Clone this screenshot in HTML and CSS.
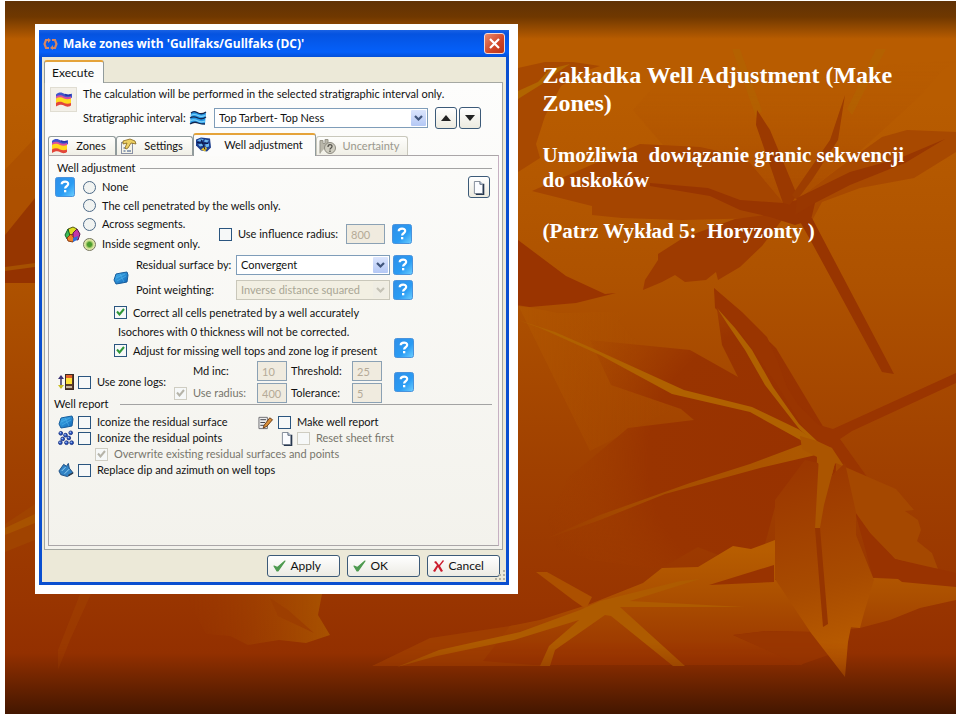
FILE: index.html
```html
<!DOCTYPE html>
<html lang="pl">
<head>
<meta charset="utf-8">
<title>Make Zones – Well Adjustment</title>
<link rel="stylesheet" href="styles.css">
</head>
<body>
<svg class="defs" aria-hidden="true">
  <defs>
    <linearGradient id="gHelp" x1="0" y1="0" x2="1" y2="1"><stop offset="0" stop-color="#2f8fe8"/><stop offset=".6" stop-color="#2a9cf4"/><stop offset="1" stop-color="#6fd0ff"/></linearGradient>
    <linearGradient id="gBlue" x1="0" y1="0" x2="1" y2="1"><stop offset="0" stop-color="#45b4ee"/><stop offset="1" stop-color="#0f63b5"/></linearGradient>
    <symbol id="help" viewBox="0 0 20 20"><rect x=".5" y=".5" width="19" height="19" rx="2" fill="url(#gHelp)" stroke="#4a93dc"/><path d="M6.700 7.200C6.800 3.800 13.300 3.700 13.200 7c0 2.200-3.100 2.300-3.100 4.500" fill="none" stroke="#fff" stroke-width="2.200"/><rect x="9" y="13" width="2.300" height="2.300" fill="#fff"/></symbol>
    <symbol id="flag" viewBox="0 0 18 16"><path d="M1 3c3-3 6-2 9-.5s5 1 7-.5v4c-3 2-5 1-8 0S4 5 1 7z" fill="#3f55cc"/><path d="M1 5c3-2 6-1 8 0s5 1 7 0v4c-3 2-5 1-7 0S4 7 1 9z" fill="#d94f9e"/><path d="M1 7c3-2 6-1 8 0s5 1 7 0v5c-3 2-5 1-7 0s-5-2-8 0z" fill="#ffd91c"/><path d="M1 11.500c3-2 6-1 8 0s5 1 7 0v2.500c-3 2-5 1-7 0s-5-1-8 1z" fill="#e2463a"/><path d="M10 3c2 1 4 1 6 .3" fill="none" stroke="#2633a8" stroke-width="1.500"/></symbol>
    <symbol id="waves" viewBox="0 0 18 16"><path d="M2 3c3-3 5-1 7 0s5 1 8-1l-1 12c-3 1-5 0-7-1s-5-1-8 1z" fill="#2a9be8"/><path d="M2 3c3-3 5-1 7 0s5 1 8-1M1 8c3-2 6-1 8 0s5 1 8-1M1 14c3-2 6-2 8-1s4 1 7 1" fill="none" stroke="#14264f" stroke-width="1.300"/><path d="M2 5.500c3-2 5-1 7 0s5 1 7 0M1 11c3-2 6-1 8 0s5 1 7 0" fill="none" stroke="#7fd4fa" stroke-width="1.200"/></symbol>
    <symbol id="props" viewBox="0 0 18 16"><rect x="2.500" y="4.500" width="11" height="11" fill="#f5f3e6" stroke="#8a91a4"/><path d="M4.500 13h2m1.500 0h4M4.500 10h2" stroke="#30508a"/><path d="M4 3l7-2 5 2 1 3-5-1-3 5-2 1-1-1 2-5-4 1z" fill="#edd063" stroke="#83651b" stroke-width=".8"/></symbol>
    <symbol id="wells" viewBox="0 0 18 16"><path d="M2 3l5-2 9 1 1 9-4 4-6-1-5-5z" fill="#1c3e8d"/><path d="M3 4l4-2 3 1-4 2zM11 3l4 1-2 2-3-1zM4 8l4-1 2 2-4 1zM11 8l4-1v3l-3 1z" fill="#6db7ef"/><path d="M7 13l4-3 2 2-2 3z" fill="#e6c02d"/><path d="M3 6l11 1M7 3l4 10" stroke="#0b1746"/></symbol>
    <symbol id="unc" viewBox="0 0 18 16"><path d="M1 15V2h3v3h2V1h3v5" fill="#b9b7aa" stroke="#98968a"/><circle cx="11" cy="9.500" r="5.500" fill="#cfcdc0" stroke="#8e8c82"/><path d="M9 8.500c0-3 4-3 4-.5 0 1.500-2 1.500-2 3m0 1v1.500" fill="none" stroke="#55534c" stroke-width="1.300"/></symbol>
    <symbol id="segs" viewBox="0 0 17 17"><path d="M4 3l5-2 4 2-2 5-6 1z" fill="#dede22" stroke="#565b13"/><path d="M9 7l4-4 3 5-2 6-5-1z" fill="#c237a9" stroke="#5d174f"/><path d="M4 3l2 7-3 3-2-4z" fill="#3cbd55" stroke="#17602a"/><path d="M3 12l4-4 3 4-1 4-5-1z" fill="#ef832c" stroke="#8b3d12"/><path d="M9 12l5-2-1 4-4 2z" fill="#2c6fd8"/></symbol>
    <symbol id="surf" viewBox="0 0 16 14"><path d="M3 3l5-1 6-1 1 3-1 7-5 1-6 1-2-4z" fill="url(#gBlue)" stroke="#175d9c"/><path d="M3 7l9-4M4 10l9-5M7 3l4 8" stroke="#5bbdf0" stroke-width=".5"/></symbol>
    <symbol id="points" viewBox="0 0 17 16"><g fill="#2953bd" stroke="#122977" stroke-width=".8"><circle cx="3" cy="3" r="2"/><circle cx="8" cy="5" r="2"/><circle cx="13.500" cy="2.500" r="2"/><circle cx="11.500" cy="8" r="2"/><circle cx="5" cy="9" r="2"/><circle cx="2.500" cy="13" r="2"/><circle cx="9" cy="13" r="2"/><circle cx="14.500" cy="13" r="2"/></g><g fill="#a9c9fb"><circle cx="2.500" cy="2.500" r=".8"/><circle cx="7.500" cy="4.500" r=".8"/><circle cx="13" cy="2" r=".8"/><circle cx="11" cy="7.500" r=".8"/><circle cx="4.500" cy="8.500" r=".8"/><circle cx="2" cy="12.500" r=".8"/><circle cx="8.500" cy="12.500" r=".8"/><circle cx="14" cy="12.500" r=".8"/></g></symbol>
    <symbol id="dip" viewBox="0 0 17 16"><path d="M1 9l5-7 3 2 2-3 1 5 4 5-6 4-7-2z" fill="#3182c4" stroke="#1d4c80"/><path d="M4 9l4-4M7 12l5-5" stroke="#9bd8f4"/><path d="M11 14l5-3" stroke="#333c49" stroke-width="1.500"/></symbol>
    <symbol id="logs" viewBox="0 0 17 16"><path d="M3 2v12" stroke="#3f3560" stroke-width="1.500"/><path d="M0 5l3-4 3 4z" fill="#3b3477"/><path d="M0 11l3 4 3-4z" fill="#c9bd24"/><rect x="7.500" y=".5" width="8" height="15" fill="#5a3a2a" stroke="#3b2b23"/><path d="M8 1h6v3H8z" fill="#e0602b"/><path d="M8 4h6v6H8z" fill="#ffe23a"/><path d="M8 12h6v2H8z" fill="#c7b79c"/></symbol>
    <symbol id="report" viewBox="0 0 17 16"><path d="M1.500 2.500h9v12h-9z" fill="#ececec" stroke="#6c6c70"/><path d="M3 5h6M3 8h5M3 11h6" stroke="#3d3d45"/><path d="M7 11l6-8 3 2-6 7-4 2z" fill="#d9903a" stroke="#6b3d17"/></symbol>
    <symbol id="page" viewBox="0 0 13 16"><path d="M1.500 1.500h6l3 3v10h-9z" fill="#fbfcff" stroke="#7d8794"/><path d="M7.500 1.500v3h3" fill="#c5d6ee" stroke="#56606f"/><path d="M11.500 4v11.500H3" fill="none" stroke="#27374f" stroke-width="1.500"/></symbol>
    <symbol id="ok" viewBox="0 0 13 12"><path d="M1 6l3 5 1 0L12 1 4.500 7.500z" fill="#4d9a4f" stroke="#4d9a4f" stroke-width="1.200" stroke-linejoin="round"/></symbol>
    <symbol id="no" viewBox="0 0 11 12"><path d="M1 2l2-1 3 4 4-5 1 1-4 5 3 5-2 1-3-5-3 5-2-1 4-6z" fill="#cb1c2d"/></symbol>
    <symbol id="chev" viewBox="0 0 9 7"><path d="M1 1l3.500 3.500L8 1" fill="none" stroke="currentColor" stroke-width="2.200"/></symbol>
    <symbol id="tick" viewBox="0 0 9 8"><path d="M1 3.500l2.500 3L8 1" fill="none" stroke="currentColor" stroke-width="2"/></symbol>
  </defs>
</svg>

<main class="slide">
  <svg class="leaves" viewBox="5 1 951 713" preserveAspectRatio="none" aria-hidden="true">
    <defs>
      <linearGradient id="lf1" gradientUnits="userSpaceOnUse" x1="0" y1="60" x2="0" y2="200"><stop offset="0" stop-color="#b55800" stop-opacity="0"/><stop offset="1" stop-color="#a64700"/></linearGradient>
      <linearGradient id="lf2" gradientUnits="userSpaceOnUse" x1="0" y1="550" x2="0" y2="660"><stop offset="0" stop-color="#b75d00"/><stop offset=".4" stop-color="#ac5000"/><stop offset="1" stop-color="#993400"/></linearGradient>
      <linearGradient id="lf3" gradientUnits="userSpaceOnUse" x1="790" y1="470" x2="850" y2="660"><stop offset="0" stop-color="#9b3700"/><stop offset=".6" stop-color="#a84b00"/><stop offset="1" stop-color="#bb5e00"/></linearGradient>
      <radialGradient id="lf4" gradientUnits="userSpaceOnUse" cx="780" cy="460" r="240"><stop offset="0" stop-color="#983200"/><stop offset=".55" stop-color="#993400"/><stop offset="1" stop-color="#a24000" stop-opacity="0"/></radialGradient>
      <linearGradient id="lf5" x1="0" y1="0" x2="1" y2="0"><stop offset="0" stop-color="#a24200" stop-opacity="0"/><stop offset="1" stop-color="#b06000"/></linearGradient>
      <linearGradient id="lf6" gradientUnits="userSpaceOnUse" x1="820" y1="448" x2="540" y2="541"><stop offset="0" stop-color="#ae5900"/><stop offset=".7" stop-color="#a44a00"/><stop offset="1" stop-color="#9c3a00"/></linearGradient>
      <linearGradient id="lf7" x1="0" y1="0" x2="1" y2="0"><stop offset="0" stop-color="#b55c00"/><stop offset="1" stop-color="#aa4e00" stop-opacity="0"/></linearGradient>
    </defs>
    <path d="M5 170l30-32v60L5 235z" fill="#a84a00" opacity=".5"/>
    <path d="M5 235l30-37v70L5 270z" fill="#963600"/>
    <path d="M5 270l30-6v19H5z" fill="#943200"/>
    <path d="M5 267l30-4v4L5 271z" fill="#a65000"/>
    <path d="M5 524l30-20v36L5 552z" fill="#a04300"/>
    <path d="M5 528l30-14v9L5 535z" fill="#a85200"/>

    <path d="M518 68l27-6h28l27 4-15 5-24 15-16 30-9 28 4 14-22 14z" fill="#a84900"/>
    <path d="M518 91l20-9 12-13 20-5-15 10-13 10-24 15z" fill="#b16500"/>

    <path d="M660 80l300-20-18 10-22 26-60 55-63 49-20 10-52-17-62-48-30-35z" fill="url(#lf1)" opacity=".6"/>
    <path d="M732 49h8l22 62-6 6zM876 49h10l-34 66-5-6z" fill="#b06800" opacity=".4"/>
    <path d="M532 191l66-29 42-18 60 3 45 10 40 48-18 13-85 2-60-2-30-3v-9z" fill="#a54500"/>
    <path d="M797 200l43-33 42-30 25-7 49 2v20l-42 26-54 10-38 14-14 26z" fill="#a84900"/>
    <path d="M788 212l-26 34-22 21-22 13-2-8-10 8-21 2-10-7-13 7-19 8 2-10 13-20v-6l25-16 52-19z" fill="#9e3b00"/>
    <path d="M650 183l58 5 32 12 43 3 14-3 18 3-4 17-16 5-25-8-30-7-30-14-60-10z" fill="#983500"/>
    <path d="M757 110l13 20 27 65-7 10-7-2-27-78z" fill="#9b3900"/>
    <path d="M845 95l-7 45-26 40-15 20-5-5 38-55z" fill="#9d3d00"/>
    <path d="M797 198l53-26 50-14 45-19-40 24-55 22-35 18-20 12z" fill="#993700"/>
    <path d="M798 218h14l82 156-12-2-70-129z" fill="#983500"/>

    <path d="M518 240l48 36 39 18 11-1-40 10-46 4-12-1z" fill="#9a3400"/>
    <path d="M518 305l40 8 72-2-12 10 72 80-100 50z" fill="url(#lf7)" opacity=".45"/>
    <path d="M590 340l100 10 48 27-16-32-8-57 62 60 60 100 34 49-20 0-75 10-12 44-42 5-23-9-35 20-13 1-60-8-52-18 30-64 60-50 66-8-13-11-70-24z" fill="url(#lf4)"/>
    <path d="M714 288l28 24 25 25 11 25 9 25 12 19 20 19 14 4 123-56v10l-104 48-12 8 30 42-34-14-33-40-28-45-35-50-25-24z" fill="#9a3500"/>
    <path d="M518 320l37 12 39 17 90 41 68 17 46 22 18 12-10 2-56-31-78-18-72-39-60-27z" fill="#b06100"/>
    <path d="M717 308l18 20 17 22 21 37 26 37 18 17 5 7-22-18-35-45-20-35-17-25z" fill="#b06100"/>
    <path d="M806 443l-56 21-60 19-90 32-60 26 60-21 65-26 95-26 60-14 12-6z" fill="url(#lf6)"/>
    <path d="M800 436l17 5 15 7 33 50-30-35-11 42-4 23-5 1 2-72-15-8z" fill="#ab5500"/>
    <path d="M836 463l60 26 18 21-9 1 13 9 3 10-4 11 15 12 6 16-18-3-25-7-25-26-15-21-20-10z" fill="#a54800"/>
    <path d="M855 512l15 21 25 26 61 14v17l-54-6-4-5-25-2z" fill="#993300"/>
    <path d="M372 666l58-28 80-12 40-6v46z" fill="#9f3e00"/>
    <path d="M510 626l30-6 50-16 53-21 19-15 36-1 35-21 18 3 24-9v40l100-2 23 1 4 3 54 5v13l-36 8-30 12-30 8-48 4-47-1-32 4 70 30-270 0-50-4z" fill="url(#lf2)"/>
    <path d="M709 585l65-20v17z" fill="#993300"/>
    <path d="M733 635l32-4 50 1 16 22-31 11z" fill="#993600"/>
    <path d="M536 572h11l45 25-6 12-13-9z" fill="#ac5000"/>
    <path d="M397 667l42-17 81-18 60-22 20-9 80-20 20-2-70 22 115 6h-125l65 59h-12l-62-50-6-1-50 35-5 16h-10l9-20 30-26-65 20-77 16z" fill="#ae5b00"/>
    <path d="M775 500l30-40 13 3 10 16 17-16 11 49v23l18 45-10 33-4 15-9-1-3 15-3 35-34-44-36-54z" fill="url(#lf3)"/>
    <path d="M819 455l16 8-11 42-4 23h-5z" fill="#ab5500"/>
    <path d="M815 528h5l8 96-5 3z" fill="#963500"/>
    <path d="M185 594h137l-4 21 12 20-24 8-27-3-31 5-18-9-24-2z" fill="url(#lf5)" opacity=".7"/>
    <path d="M270 598l18 12 26 23-36-17z" fill="#9d3e00"/>
    <path d="M80 594h11L70 640l-12 30v-20z" fill="#a94b00" opacity=".3"/>
  </svg>

  <section class="picture">
    <form class="window">
      <header class="titlebar">
        <svg width="15" height="12" viewBox="0 0 15 12" aria-hidden="true"><path d="M6 2H3L1.500 6 3 10h3M9 2h3l1.500 4L12 10H9" fill="none" stroke="#d98660" stroke-width="2.200"/><path d="M5 0l3 2-3 3zM10 12l-3-2 3-3z" fill="#d98660"/></svg>
        <h1>Make zones with 'Gullfaks/Gullfaks (DC)'</h1>
        <button type="button" class="close" aria-label="Close"><svg width="13" height="13" viewBox="0 0 13 13"><path d="M2 2l9 9M11 2l-9 9" stroke="#fff" stroke-width="2.200"/></svg></button>
      </header>
      <div class="body">
        <nav class="outer-tabs"><button type="button" class="tab active">Execute</button></nav>
        <div class="outer-panel">
          <div class="intro">
            <button type="button" class="icon-tile" aria-label="Zones"><svg width="18" height="17"><use href="#flag"/></svg></button>
            <div class="intro-text">
              <p>The calculation will be performed in the selected stratigraphic interval only.</p>
              <div class="interval">
                <label for="interval">Stratigraphic interval:</label>
                <svg width="18" height="16"><use href="#waves"/></svg>
                <span class="combo wide"><select id="interval"><option>Top Tarbert- Top Ness</option></select><i><svg width="9" height="7"><use href="#chev"/></svg></i></span>
                <button type="button" class="square" aria-label="Previous"><svg width="10" height="6" viewBox="0 0 10 6"><path d="M0 6l5-6 5 6z" fill="#222"/></svg></button>
                <button type="button" class="square" aria-label="Next"><svg width="10" height="6" viewBox="0 0 10 6"><path d="M0 0h10L5 6z" fill="#222"/></svg></button>
              </div>
            </div>
          </div>

          <nav class="inner-tabs">
            <button type="button" class="tab t-zones"><svg width="18" height="16"><use href="#flag"/></svg><span>Zones</span></button>
            <button type="button" class="tab t-settings"><svg width="18" height="16"><use href="#props"/></svg><span>Settings</span></button>
            <button type="button" class="tab t-wells active"><svg width="18" height="17"><use href="#wells"/></svg><span>Well adjustment</span></button>
            <button type="button" class="tab t-unc" disabled><svg width="18" height="17"><use href="#unc"/></svg><span>Uncertainty</span></button>
          </nav>

          <div class="inner-panel">
            <h2 class="legend"><span>Well adjustment</span></h2>
            <div class="row first">
              <button type="button" class="help" aria-label="Help"><svg width="20" height="20"><use href="#help"/></svg></button>
              <label class="opt"><input type="radio" name="mode">None</label>
              <button type="button" class="square end" aria-label="New sheet"><svg width="12" height="15"><use href="#page"/></svg></button>
            </div>
            <div class="row second"><label class="opt"><input type="radio" name="mode">The cell penetrated by the wells only.</label></div>
            <div class="segments">
              <svg width="17" height="17"><use href="#segs"/></svg>
              <div class="stack">
                <label class="opt"><input type="radio" name="mode">Across segments.</label>
                <label class="opt"><input type="radio" name="mode" checked>Inside segment only.</label>
              </div>
              <label class="opt influence"><span class="check"><input type="checkbox"></span>Use influence radius:</label>
              <input class="field" type="text" value="800" aria-label="Influence radius" disabled>
              <button type="button" class="help" aria-label="Help"><svg width="20" height="20"><use href="#help"/></svg></button>
            </div>
            <div class="residual">
              <svg width="16" height="14"><use href="#surf"/></svg>
              <label for="surface">Residual surface by:</label>
              <span class="combo"><select id="surface"><option>Convergent</option></select><i><svg width="9" height="7"><use href="#chev"/></svg></i></span>
              <button type="button" class="help" aria-label="Help"><svg width="20" height="20"><use href="#help"/></svg></button>
              <label for="weight">Point weighting:</label>
              <span class="combo off"><select id="weight" disabled><option>Inverse distance squared</option></select><i><svg width="9" height="7"><use href="#chev"/></svg></i></span>
              <button type="button" class="help" aria-label="Help"><svg width="20" height="20"><use href="#help"/></svg></button>
            </div>
            <div class="corrections">
              <div class="stack">
                <label class="opt"><span class="check"><input type="checkbox" checked><svg width="9" height="8"><use href="#tick"/></svg></span>Correct all cells penetrated by a well accurately</label>
                <p>Isochores with 0 thickness will not be corrected.</p>
                <label class="opt"><span class="check"><input type="checkbox" checked><svg width="9" height="8"><use href="#tick"/></svg></span>Adjust for missing well tops and zone log if present</label>
              </div>
              <button type="button" class="help" aria-label="Help"><svg width="20" height="20"><use href="#help"/></svg></button>
            </div>
            <div class="logs">
              <svg width="17" height="16"><use href="#logs"/></svg>
              <label class="opt"><span class="check"><input type="checkbox"></span>Use zone logs:</label>
              <div class="log-grid">
                <label class="inc" for="inc">Md inc:</label>
                <input class="field" id="inc" type="text" value="10" disabled>
                <label for="thr">Threshold:</label>
                <input class="field" id="thr" type="text" value="25" disabled>
                <label class="opt dim"><span class="check off"><input type="checkbox" checked disabled><svg width="9" height="8"><use href="#tick"/></svg></span>Use radius:</label>
                <input class="field" type="text" value="400" aria-label="Radius" disabled>
                <label for="tol">Tolerance:</label>
                <input class="field" id="tol" type="text" value="5" disabled>
              </div>
              <button type="button" class="help" aria-label="Help"><svg width="20" height="20"><use href="#help"/></svg></button>
            </div>
            <h2 class="legend report"><span>Well report</span></h2>
            <div class="report-grid">
              <div class="item"><svg width="16" height="14"><use href="#surf"/></svg><label class="opt"><span class="check"><input type="checkbox"></span>Iconize the residual surface</label></div>
              <div class="item"><svg width="17" height="15"><use href="#report"/></svg><label class="opt"><span class="check"><input type="checkbox"></span>Make well report</label></div>
              <div class="item"><svg width="16" height="16"><use href="#points"/></svg><label class="opt"><span class="check"><input type="checkbox"></span>Iconize the residual points</label></div>
              <div class="item sub"><svg width="12" height="15"><use href="#page"/></svg><label class="opt dim"><span class="check off"><input type="checkbox" disabled></span>Reset sheet first</label></div>
              <div class="item over"><label class="opt dim"><span class="check off"><input type="checkbox" checked disabled><svg width="9" height="8"><use href="#tick"/></svg></span>Overwrite existing residual surfaces and points</label></div>
              <div class="item all"><svg width="16" height="16"><use href="#dip"/></svg><label class="opt"><span class="check"><input type="checkbox"></span>Replace dip and azimuth on well tops</label></div>
            </div>
          </div>
        </div>
        <footer class="actions">
          <button type="button"><svg width="13" height="12"><use href="#ok"/></svg>Apply</button>
          <button type="button"><svg width="13" height="12"><use href="#ok"/></svg>OK</button>
          <button type="button"><svg width="11" height="12"><use href="#no"/></svg>Cancel</button>
          <svg class="grip" width="11" height="11" viewBox="0 0 11 11" aria-hidden="true"><path d="M9 0h2v2H9zM5 4h2v2H5zM9 4h2v2H9zM1 8h2v2H1zM5 8h2v2H5zM9 8h2v2H9z" fill="#b3b2a4"/></svg>
        </footer>
      </div>
    </form>
  </section>

  <article class="notes">
    <h3>Zakładka Well Adjustment (Make Zones)</h3>
    <p>Umożliwia&nbsp; dowiązanie granic sekwencji do uskoków</p>
    <p>(Patrz Wykład 5:&nbsp; Horyzonty )</p>
  </article>
</main>
</body>
</html>
```
FILE: styles.css
```css
* { box-sizing: border-box; }
body { margin: 0; background: #fff; font-family: Lato, "Liberation Sans", Arial, sans-serif; }
h1, h2, h3, p { margin: 0; font-weight: normal; }
button, input, select { font: inherit; color: inherit; margin: 0; padding: 0; }
button { background: none; border: 0; }
svg { display: block; flex: none; }
.defs { position: absolute; width: 0; height: 0; }

.slide {
  position: relative;
  display: flex;
  align-items: flex-start;
  margin: 1px 4px 2px 5px;
  min-height: calc(100vh - 3px);
  padding: 23px 24px 24px 30px;
  background: linear-gradient(#603206, #703800 16px, #b85c00 38px, #b85c00 100px, #ae5200 280px, #a04000 470px, #993500 600px, #933000 652px, #431600 100%);
}
.leaves {
  position: absolute; inset: 0; width: 100%; height: 100%;
  mask-image: linear-gradient(#000 90%, transparent 98%);
}

.picture { position: relative; width: 53.9%; background: #fff; padding: 6px 9px 9px 4px; }
.notes {
  position: relative; flex: 1; padding: 37px 16px 0 24px;
  color: #fff; font: bold 21px/25px "Liberation Serif", "Times New Roman", serif;
}
.notes h3 { font-size: 24px; line-height: 28px; font-weight: bold; margin-bottom: 26px; }
.notes p { margin-bottom: 26px; font-weight: bold; }

.window { background: #0a4fd0; padding-bottom: 3px; font-size: 11px; line-height: 16px; color: #111; }
.titlebar {
  display: flex; align-items: center; gap: 5px; height: 27px; padding: 0 4px;
  background: linear-gradient(#1a62e4, #0553e0 4px, #0560fa 22px, #0550d8);
  color: #fff;
}
.titlebar h1 { flex: 1; font: bold 12px/16px "Open Sans", sans-serif; }
.close { display: grid; place-items: center; width: 21px; height: 21px; border: 1px solid #f4d9d4; border-radius: 3px; background: linear-gradient(135deg, #ea8a6c, #cf4426 60%, #b8341a); }

.body { margin: 0 3px; padding: 3px 3px 0 2px; background: #ece9d8; }
.tab { display: flex; align-items: center; background: linear-gradient(#fefefc, #f0efe6); border: 1px solid #919b9c; border-bottom: 0; border-radius: 3px 3px 0 0; }
.tab.active { background: #fcfcfb; border-top: 2px solid #e5a33a; }
.outer-tabs { display: flex; }
.outer-tabs .tab { height: 23px; width: 60px; padding-left: 7px; margin-bottom: -1px; position: relative; font-size: 12px; }
.outer-panel { background: linear-gradient(#fdfdfc, #f3f2ec); border: 1px solid #a5a8a2; padding: 3px; }

.intro { display: flex; gap: 6px; }
.icon-tile { display: grid; place-items: center; width: 27px; height: 25px; margin: 1px 0 0 2px; background: #f3f0e8; border: 1px solid #e0ddd2; }
.intro-text { flex: 1; }
.interval { display: flex; align-items: center; height: 24px; margin-top: 4px; gap: 7px; }
.interval label { width: 99px; white-space: nowrap; }
.interval .square + .square { margin-left: -5px; }
.square { display: grid; place-items: center; width: 22px; height: 22px; border: 1px solid #3c5a78; border-radius: 3px; background: linear-gradient(#fff, #eceadf); }

.combo { position: relative; display: block; height: 20px; }
.combo.wide { width: 214px; }
.combo select { display: block; appearance: none; width: 100%; height: 100%; padding: 0 18px 0 4px; border: 1px solid #7f9db9; border-radius: 0; background: #fff; }
.combo i { position: absolute; top: 2px; right: 2px; bottom: 2px; width: 15px; display: grid; place-items: center; background: linear-gradient(#dbe5fd, #b4c8f5); color: #40557c; pointer-events: none; border-radius: 1px; }
.combo.off select { background: #f2efe2; border-color: #c9c7ba; color: #a9a695; opacity: 1; }
.combo.off i { background: #efede3; color: #c4c2b6; }

.inner-tabs { display: flex; align-items: flex-end; height: 23px; margin-top: 2px; font-size: 11px; }
.inner-tabs .tab { height: 19px; position: relative; padding: 0 2px; }
.inner-tabs .tab span { flex: 1; text-align: center; }
.inner-tabs .t-zones { width: 68px; }
.inner-tabs .t-settings { width: 77px; }
.inner-tabs .t-wells { width: 123px; height: 23px; margin-bottom: -1px; padding: 0 0 2px; }
.inner-tabs .t-unc { width: 92px; color: #9a988d; border-color: #c9c8bc; }
.inner-panel { border: 1px solid #aaa6a8; border-right-color: #c6b0c2; padding: 3px 6px 0 5px; }

.legend { display: flex; align-items: center; gap: 4px; height: 18px; font-size: 11px; padding-left: 3px; }
.legend::after { content: ""; flex: 1; height: 1px; background: #a3a3a3; }
.legend.report { gap: 11px; height: 10px; margin-bottom: 4px; margin-top: -4px; padding-left: 0; }
.row { display: flex; align-items: center; }
.first { height: 20px; padding-left: 1px; gap: 8px; }
.first .end { margin: 0 2px 0 auto; }
.second { height: 17px; padding-left: 29px; }
.opt { display: flex; align-items: center; gap: 6px; white-space: nowrap; }
.opt input[type=radio] { appearance: none; width: 13px; height: 13px; border: 1px solid #4d6a87; border-radius: 50%; background: #f1f3f1; }
.opt input[type=radio]:checked { background: radial-gradient(#4b9c2c 2px, #cfe08f 4px, #f0f0c8 6px); border-color: #75755a; }
.check { position: relative; display: block; flex: none; width: 13px; height: 13px; }
.check input { appearance: none; display: block; width: 13px; height: 13px; border: 1px solid #2a557f; background: #f6f8f8; }
.check svg { position: absolute; left: 2px; top: 2px; color: #2f9638; pointer-events: none; }
.check.off input { border-color: #cfcdc2; }
.check.off svg { color: #b6b4a9; }
.dim { color: #77756c; }
.field { width: 30px; height: 20px; padding: 0 4px; border: 1px solid #8ba1b4; background: #f0ebdf; color: #b5aa97; }
.help { display: block; width: 20px; height: 20px; }

.segments { display: flex; align-items: center; height: 40px; padding-left: 10px; }
.segments .opt { height: 20px; }
.segments .stack { margin-left: 2px; width: 136px; }
.segments .influence { width: 127px; }
.segments .field { width: 39px; }
.segments .help { margin-left: 7px; }
.residual { display: grid; grid-template-columns: 16px 101px 154px 20px; gap: 5px 3px; align-items: center; padding: 1px 0 0 59px; }
.residual label { padding-left: 4px; white-space: nowrap; }
.residual > svg { grid-row: 1 / 3; }
.corrections { display: flex; align-items: center; padding: 3px 0 1px 60px; }
.corrections .stack { width: 280px; }
.corrections .opt, .corrections p { height: 19px; line-height: 19px; }
.corrections p { padding-left: 4px; }
.corrections .help { margin-top: 32px; }
.logs { display: flex; align-items: center; padding-left: 4px; }
.logs > .opt { margin-left: 3px; width: 96px; }
.log-grid { display: grid; grid-template-columns: 79px 30px 57px 30px; column-gap: 4px; row-gap: 2px; align-items: center; }
.log-grid .inc { padding-left: 19px; }
.logs .help { margin-left: 12px; }
.report-grid { display: grid; grid-template-columns: 199px 1fr; grid-auto-rows: 16px; padding: 1px 0 67px 4px; }
.item { display: flex; align-items: center; gap: 4px; }
.item .opt { gap: 6px; }
.item.sub { padding-left: 24px; }
.item.over, .item.all { grid-column: 1 / 3; }
.item.over { padding-left: 37px; }

.actions { position: relative; display: flex; justify-content: flex-end; gap: 7px; padding: 5px 3px 5px; font-size: 12px; }
.actions button { display: flex; align-items: center; gap: 4px; width: 73px; height: 22px; padding: 0 5px; border: 1px solid #3c5a78; border-radius: 3px; background: linear-gradient(#fff, #ecebe4); }
.grip { position: absolute; right: -2px; bottom: 1px; }
```
